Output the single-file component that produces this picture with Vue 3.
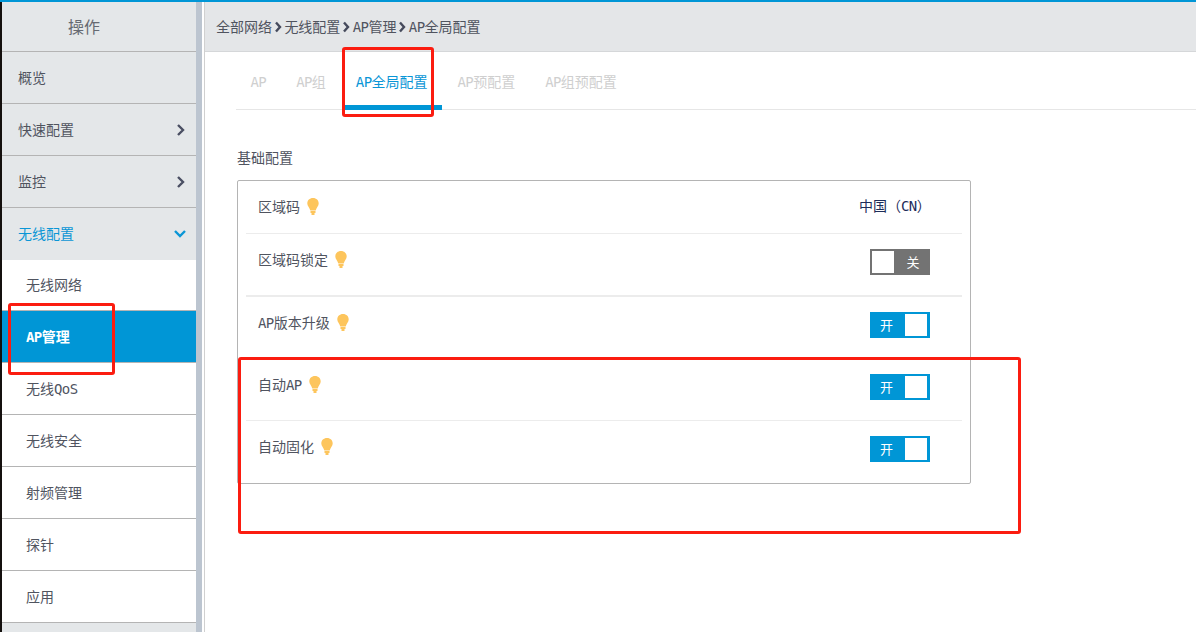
<script setup>
import { h } from "vue";

// latin letters are narrower in the reference, so they get their own span
const Txt = (props) =>
  props.s
    .split(/([A-Za-z]+)/)
    .filter(Boolean)
    .map((p) => (/[A-Za-z]/.test(p) ? h("span", { class: "lt" }, p) : p));
Txt.props = ["s"];

const groups = [
  { name: "概览" },
  { name: "快速配置", arrow: true },
  { name: "监控", arrow: true },
  { name: "无线配置", open: true },
];
const subs = ["无线网络", "AP管理", "无线QoS", "无线安全", "射频管理", "探针", "应用"];
const crumbs = ["全部网络", "无线配置", "AP管理", "AP全局配置"];
const tabs = ["AP", "AP组", "AP全局配置", "AP预配置", "AP组预配置"];
const rows = [
  { label: "区域码", value: "中国（CN）", cls: "first" },
  { label: "区域码锁定", on: false, cls: "thick" },
  { label: "AP版本升级", on: true, cls: "plain" },
  { label: "自动AP", on: true, cls: "fourth" },
  { label: "自动固化", on: true, cls: "last" },
];
</script>

<template>
  <div class="page">
    <div class="topbar"></div>
    <div class="body">
      <div class="strip"></div>
      <aside class="sidebar">
        <div class="side-head">操作</div>
        <div
          v-for="g in groups"
          :key="g.name"
          class="group"
          :class="{ open: g.open }"
        >
          <span>{{ g.name }}</span>
          <svg v-if="g.arrow" class="chev" width="10" height="14" viewBox="0 0 10 14">
            <path d="M2 2l5 5-5 5" fill="none" stroke="#4a4f63" stroke-width="2.4" />
          </svg>
          <svg v-if="g.open" class="chev down" width="14" height="10" viewBox="0 0 14 10">
            <path d="M2 2l5 5 5-5" fill="none" stroke="#0a96d6" stroke-width="2.4" />
          </svg>
        </div>
        <div
          v-for="(s, i) in subs"
          :key="s"
          class="sub"
          :class="{ active: s === 'AP管理', short: i === 0 }"
        >
          <Txt :s="s" />
        </div>
        <div class="side-foot"></div>
      </aside>
      <div class="scroll"></div>
      <main class="main">
        <div class="crumbs">
          <template v-for="(c, i) in crumbs" :key="c">
            <svg v-if="i > 0" class="sep" width="9" height="12" viewBox="0 0 9 12">
              <path d="M2 1.5l4 4.5-4 4.5" fill="none" stroke="#454a5c" stroke-width="2.4" />
            </svg>
            <span><Txt :s="c" /></span>
          </template>
        </div>
        <div class="content">
          <div class="tabs">
            <div
              v-for="t in tabs"
              :key="t"
              class="tab"
              :class="{ active: t === 'AP全局配置' }"
            >
              <Txt :s="t" />
            </div>
          </div>
          <div class="title">基础配置</div>
          <div class="card">
            <div v-for="r in rows" :key="r.label" class="row" :class="r.cls">
              <div class="label">
                <span><Txt :s="r.label" /></span>
                <svg class="bulb" width="12" height="17" viewBox="0 0 12 17">
                  <path
                    d="M6 0C2.600 0 .3 2.400 .3 5.400c0 2.600 2.200 3.900 3 7.100h5.400c.8-3.200 3-4.500 3-7.100C11.700 2.400 9.400 0 6 0z"
                    fill="#fdc55c"
                  />
                  <rect x="3.500" y="13" width="5" height="2" fill="#fdc55c" />
                  <rect x="4.500" y="15" width="3" height="2" fill="#fdc55c" />
                </svg>
              </div>
              <div v-if="r.value" class="value"><Txt :s="r.value" /></div>
              <div v-else class="toggle" :class="{ on: r.on }">
                <span class="state">{{ r.on ? "开" : "关" }}</span>
                <span class="knob"></span>
              </div>
            </div>
          </div>
        </div>
      </main>
    </div>

    <!-- red annotation boxes drawn on top of the screenshot -->
    <div class="mark mark-tab"></div>
    <div class="mark mark-side"></div>
    <div class="mark mark-rows"></div>
  </div>
</template>

<style scoped>
.page {
  position: relative;
  width: 1196px;
  height: 632px;
  overflow: hidden;
  display: flex;
  flex-direction: column;
  background: #fff;
  color: #50545f;
  font-family: "Noto Sans CJK SC", "Noto Sans", sans-serif;
  font-size: 14px;
}
.topbar {
  height: 2px;
  flex: none;
  background: #0096d6;
}
.body {
  flex: 1;
  display: flex;
  min-height: 0;
}
.strip {
  width: 2px;
  flex: none;
  background: #14100e;
}
.sidebar {
  width: 194px;
  flex: none;
  display: flex;
  flex-direction: column;
  background: #fff;
}
.side-head {
  height: 49px;
  flex: none;
  padding-left: 66px;
  line-height: 49px;
  font-size: 16px;
  color: #666a72;
  background: #e4e7e9;
  border-bottom: 1px solid #b4b4b4;
}
.group {
  height: 49px;
  padding: 0 10px 2px 16px;
  flex: none;
  display: flex;
  align-items: center;
  justify-content: space-between;
  background: #e4e7e9;
  border-bottom: 1px solid #b4b4b4;
}
.group.open {
  color: #0a96d6;
  border-bottom-color: #e4e7e9;
}
.chev {
  margin-top: 2px;
}
.chev.down {
  margin-right: -1px;
}
.sub {
  height: 51px;
  flex: none;
  padding-left: 24px;
  line-height: 51px;
  border-bottom: 1px solid #b4b4b4;
}
.sub.short {
  height: 50px;
  line-height: 49px;
}
.sub.active {
  color: #fff;
  font-weight: 700;
  background: #0096d6;
}
.side-foot {
  flex: 1;
  background: #e4e7e9;
}
.scroll {
  width: 6px;
  flex: none;
  background: #bcc5d0;
}
.main {
  flex: 1;
  min-width: 0;
  margin-left: 2px;
  border-left: 1px solid #d0d0d0;
  display: flex;
  flex-direction: column;
}
.crumbs {
  height: 47px;
  flex: none;
  padding: 0 0 2px 11px;
  display: flex;
  align-items: center;
  gap: 1.7px;
  color: #50545f;
  background: #e4e6e8;
  border-bottom: 1px solid #d5d7d9;
}
.sep {
  flex: none;
  margin-top: 2px;
}
.content {
  padding: 0 0 0 32px;
}
.tabs {
  height: 57px;
  display: flex;
  margin-left: -1px;
  border-bottom: 1px solid #e6e6e6;
}
.tab {
  position: relative;
  margin: 0 1.5px;
  padding: 0 14px 0 13px;
  line-height: 58px;
  color: #cfcfcf;
}
.tab.active {
  color: #0a96d6;
}
.tab.active::after {
  content: "";
  position: absolute;
  left: 0;
  right: 0;
  bottom: -1px;
  height: 5px;
  background: #0096d6;
}
.title {
  margin-top: 37px;
  line-height: 20px;
}
.card {
  margin-top: 13px;
  width: 734px;
  height: 304px;
  box-sizing: border-box;
  border: 1px solid #b4b4b4;
  border-radius: 2px;
  padding: 0 8px;
}
.row {
  height: 62px;
  padding: 15px 32px 0 12px;
  box-sizing: border-box;
  display: flex;
  align-items: flex-start;
  justify-content: space-between;
  border-bottom: 1px solid #ececec;
}
.row.first {
  height: 53px;
}
.row.thick {
  height: 63px;
  border-bottom-width: 2px;
}
.row.plain {
  height: 61px;
  border-bottom: none;
}
.row.fourth {
  height: 63px;
  padding-top: 16px;
}
.row.last {
  border-bottom: none;
}
.label {
  display: flex;
  align-items: center;
  line-height: 20px;
  gap: 7px;
}
.bulb {
  flex: none;
}
.value {
  margin-top: -1px;
  line-height: 20px;
  color: #1d2c59;
  width: 72px;
  margin-right: -1px;
}
.toggle {
  width: 60px;
  height: 26px;
  box-sizing: border-box;
  border: 2px solid #737373;
  border-right-width: 3px;
  background: #737373;
  display: flex;
  flex-direction: row-reverse;
  justify-content: space-between;
  align-items: center;
  color: #fff;
  font-size: 13px;
}
.toggle.on {
  background: #0096d6;
  border-color: #0096d6;
  flex-direction: row;
}
.state {
  flex: 1;
  padding-left: 5px;
  text-align: center;
  line-height: 20px;
}
.toggle.on .state {
  flex: none;
  padding-left: 0;
  margin-left: 8px;
}
.knob {
  width: 22px;
  height: 22px;
  background: #fff;
}
.mark {
  position: absolute;
  box-sizing: border-box;
  border: 3px solid #fb1c10;
  border-radius: 3px;
  pointer-events: none;
}
.mark-tab {
  left: 342px;
  top: 47px;
  width: 92px;
  height: 70px;
}
.mark-side {
  left: 8px;
  top: 303px;
  width: 107px;
  height: 72px;
}
.mark-rows {
  left: 238px;
  top: 357px;
  width: 783px;
  height: 177px;
}
</style>

<style>
.lt {
  font-family: "DejaVu Sans Mono", monospace;
  font-size: 14px;
  letter-spacing: -0.6px;
}
</style>
